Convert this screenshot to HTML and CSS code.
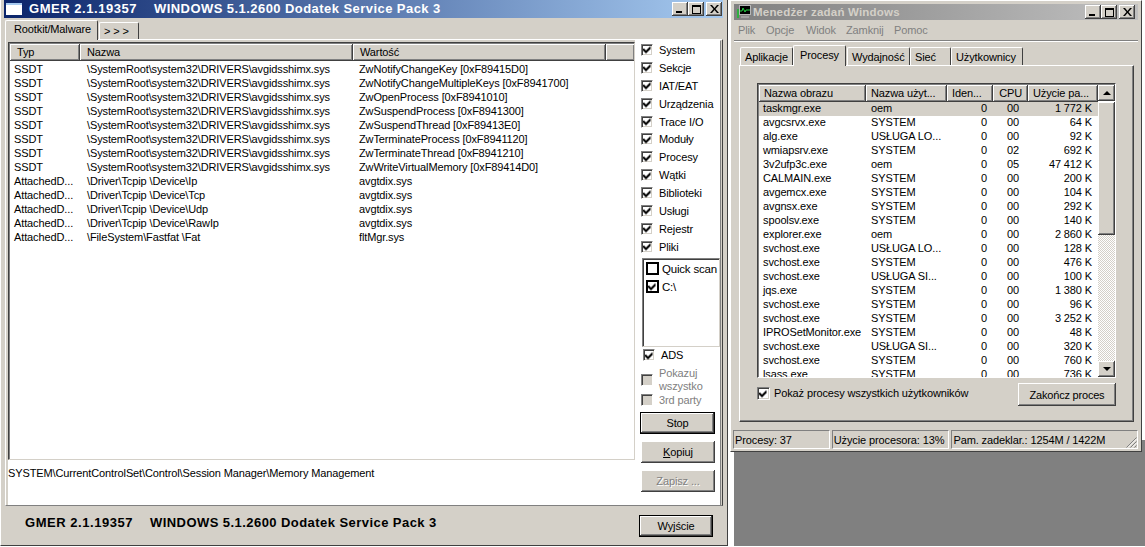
FILE: index.html
```html
<!DOCTYPE html>
<html lang="pl">
<head>
<meta charset="utf-8">
<title>GMER</title>
<link rel="stylesheet" href="styles.css">
</head>
<body>
<svg class="defs" width="0" height="0"><symbol id="chk" viewBox="0 0 9 9"><path d="M1 3.500h1v1h1v1h1v-1h1v-1h1v-1h1v-1h1v3h-1v1h-1v1h-1v1h-1v1h-1v-1h-1v-1h-1v-1h-1z" transform="translate(-0.5 0)"/></symbol></svg>
<div class="desk"></div>

<section class="win gmer">
  <header class="title active">
    <span class="appicon"></span>
    <span class="caption"><b>GMER 2.1.19357</b><b>WINDOWS 5.1.2600 Dodatek Service Pack 3</b></span>
    <span class="ctrls">
      <span class="ctl"><i class="g-min"></i></span><span class="ctl"><i class="g-max"></i></span><span class="ctl gap"><svg width="9" height="8" viewBox="0 0 9 8"><path d="M0 0h2l2.500 3 2.500-3h2l-3.500 4 3.500 4h-2l-2.500-3-2.500 3h-2l3.500-4z"/></svg></span>
    </span>
  </header>
  <nav class="gtabs">
    <span class="gtab on">Rootkit/Malware</span>
    <span class="gtab">&gt; &gt; &gt;</span>
  </nav>
  <div class="gpage">
    <div class="gmain">
      <div class="glist">
        <div class="ghead"><span>Typ</span><span>Nazwa</span><span>Wartość</span><span></span></div>
        <div class="grow"><span>SSDT</span><span>\SystemRoot\system32\DRIVERS\avgidsshimx.sys</span><span>ZwNotifyChangeKey [0xF89415D0]</span></div>
        <div class="grow"><span>SSDT</span><span>\SystemRoot\system32\DRIVERS\avgidsshimx.sys</span><span>ZwNotifyChangeMultipleKeys [0xF8941700]</span></div>
        <div class="grow"><span>SSDT</span><span>\SystemRoot\system32\DRIVERS\avgidsshimx.sys</span><span>ZwOpenProcess [0xF8941010]</span></div>
        <div class="grow"><span>SSDT</span><span>\SystemRoot\system32\DRIVERS\avgidsshimx.sys</span><span>ZwSuspendProcess [0xF8941300]</span></div>
        <div class="grow"><span>SSDT</span><span>\SystemRoot\system32\DRIVERS\avgidsshimx.sys</span><span>ZwSuspendThread [0xF89413E0]</span></div>
        <div class="grow"><span>SSDT</span><span>\SystemRoot\system32\DRIVERS\avgidsshimx.sys</span><span>ZwTerminateProcess [0xF8941120]</span></div>
        <div class="grow"><span>SSDT</span><span>\SystemRoot\system32\DRIVERS\avgidsshimx.sys</span><span>ZwTerminateThread [0xF8941210]</span></div>
        <div class="grow"><span>SSDT</span><span>\SystemRoot\system32\DRIVERS\avgidsshimx.sys</span><span>ZwWriteVirtualMemory [0xF89414D0]</span></div>
        <div class="grow"><span>AttachedD...</span><span>\Driver\Tcpip \Device\Ip</span><span>avgtdix.sys</span></div>
        <div class="grow"><span>AttachedD...</span><span>\Driver\Tcpip \Device\Tcp</span><span>avgtdix.sys</span></div>
        <div class="grow"><span>AttachedD...</span><span>\Driver\Tcpip \Device\Udp</span><span>avgtdix.sys</span></div>
        <div class="grow"><span>AttachedD...</span><span>\Driver\Tcpip \Device\RawIp</span><span>avgtdix.sys</span></div>
        <div class="grow"><span>AttachedD...</span><span>\FileSystem\Fastfat \Fat</span><span>fltMgr.sys</span></div>
      </div>
      <div class="memo">SYSTEM\CurrentControlSet\Control\Session Manager\Memory Management</div>
    </div>
    <aside class="gside">
      <div class="checks">
        <label class="ck"><span class="box"><svg><use href="#chk"/></svg></span>System</label>
        <label class="ck"><span class="box"><svg><use href="#chk"/></svg></span>Sekcje</label>
        <label class="ck"><span class="box"><svg><use href="#chk"/></svg></span>IAT/EAT</label>
        <label class="ck"><span class="box"><svg><use href="#chk"/></svg></span>Urządzenia</label>
        <label class="ck"><span class="box"><svg><use href="#chk"/></svg></span>Trace I/O</label>
        <label class="ck"><span class="box"><svg><use href="#chk"/></svg></span>Moduły</label>
        <label class="ck"><span class="box"><svg><use href="#chk"/></svg></span>Procesy</label>
        <label class="ck"><span class="box"><svg><use href="#chk"/></svg></span>Wątki</label>
        <label class="ck"><span class="box"><svg><use href="#chk"/></svg></span>Biblioteki</label>
        <label class="ck"><span class="box"><svg><use href="#chk"/></svg></span>Usługi</label>
        <label class="ck"><span class="box"><svg><use href="#chk"/></svg></span>Rejestr</label>
        <label class="ck"><span class="box"><svg><use href="#chk"/></svg></span>Pliki</label>
      </div>
      <div class="tree">
        <label class="tk"><span class="tbox"></span>Quick scan</label>
        <label class="tk"><span class="tbox"><svg><use href="#chk"/></svg></span>C:\</label>
      </div>
      <label class="ck ads"><span class="box"><svg><use href="#chk"/></svg></span>ADS</label>
      <label class="ck dis two"><span class="box"></span><span>Pokazuj<br>wszystko</span></label>
      <label class="ck dis third"><span class="box"></span>3rd party</label>
      <button class="btn def stop">Stop</button>
      <button class="btn kop"><u>K</u>opiuj</button>
      <button class="btn zap dimtext">Zapisz ...</button>
    </aside>
  </div>
  <footer class="gfoot">
    <span class="caption"><b>GMER 2.1.19357</b><b>WINDOWS 5.1.2600 Dodatek Service Pack 3</b></span>
    <button class="btn def wyj">Wyjście</button>
  </footer>
</section>

<section class="win tm">
  <header class="title inactive">
    <svg class="tmicon" width="16" height="16" viewBox="0 0 16 16"><rect x="3.500" y="1.500" width="11" height="9" fill="#000" stroke="#b8b8b8"/><path d="M4 7h2l1-3 2 4 1-2h4" fill="none" stroke="#20d040"/><rect x="1" y="5" width="2" height="9" fill="#30b040"/><rect x="5" y="12" width="8" height="2" fill="#a0a0a0"/></svg>
    <b class="tmcap">Menedżer zadań Windows</b>
    <span class="ctrls">
      <span class="ctl"><i class="g-min"></i></span><span class="ctl"><i class="g-max"></i></span><span class="ctl gap"><svg width="9" height="8" viewBox="0 0 9 8"><path d="M0 0h2l2.500 3 2.500-3h2l-3.500 4 3.500 4h-2l-2.500-3-2.500 3h-2l3.500-4z"/></svg></span>
    </span>
  </header>
  <nav class="menu"><span>Plik</span><span>Opcje</span><span>Widok</span><span>Zamknij</span><span>Pomoc</span></nav>
  <nav class="ttabs">
    <span class="ttab t1">Aplikacje</span><span class="ttab t2 on">Procesy</span><span class="ttab t3">Wydajność</span><span class="ttab t4">Sieć</span><span class="ttab t5">Użytkownicy</span>
  </nav>
  <div class="tpage">
    <div class="plist">
      <div class="ptable">
        <div class="phead"><span>Nazwa obrazu</span><span>Nazwa użyt...</span><span>Iden...</span><span class="r">CPU</span><span>Użycie pa...</span></div>
        <div class="prow sel"><span>taskmgr.exe</span><span>oem</span><span class="r">0</span><span class="r">00</span><span class="r">1 772 K</span></div>
        <div class="prow"><span>avgcsrvx.exe</span><span>SYSTEM</span><span class="r">0</span><span class="r">00</span><span class="r">64 K</span></div>
        <div class="prow"><span>alg.exe</span><span>USŁUGA LO...</span><span class="r">0</span><span class="r">00</span><span class="r">92 K</span></div>
        <div class="prow"><span>wmiapsrv.exe</span><span>SYSTEM</span><span class="r">0</span><span class="r">02</span><span class="r">692 K</span></div>
        <div class="prow"><span>3v2ufp3c.exe</span><span>oem</span><span class="r">0</span><span class="r">05</span><span class="r">47 412 K</span></div>
        <div class="prow"><span>CALMAIN.exe</span><span>SYSTEM</span><span class="r">0</span><span class="r">00</span><span class="r">200 K</span></div>
        <div class="prow"><span>avgemcx.exe</span><span>SYSTEM</span><span class="r">0</span><span class="r">00</span><span class="r">104 K</span></div>
        <div class="prow"><span>avgnsx.exe</span><span>SYSTEM</span><span class="r">0</span><span class="r">00</span><span class="r">292 K</span></div>
        <div class="prow"><span>spoolsv.exe</span><span>SYSTEM</span><span class="r">0</span><span class="r">00</span><span class="r">140 K</span></div>
        <div class="prow"><span>explorer.exe</span><span>oem</span><span class="r">0</span><span class="r">00</span><span class="r">2 860 K</span></div>
        <div class="prow"><span>svchost.exe</span><span>USŁUGA LO...</span><span class="r">0</span><span class="r">00</span><span class="r">128 K</span></div>
        <div class="prow"><span>svchost.exe</span><span>SYSTEM</span><span class="r">0</span><span class="r">00</span><span class="r">476 K</span></div>
        <div class="prow"><span>svchost.exe</span><span>USŁUGA SI...</span><span class="r">0</span><span class="r">00</span><span class="r">100 K</span></div>
        <div class="prow"><span>jqs.exe</span><span>SYSTEM</span><span class="r">0</span><span class="r">00</span><span class="r">1 380 K</span></div>
        <div class="prow"><span>svchost.exe</span><span>SYSTEM</span><span class="r">0</span><span class="r">00</span><span class="r">96 K</span></div>
        <div class="prow"><span>svchost.exe</span><span>SYSTEM</span><span class="r">0</span><span class="r">00</span><span class="r">3 252 K</span></div>
        <div class="prow"><span>IPROSetMonitor.exe</span><span>SYSTEM</span><span class="r">0</span><span class="r">00</span><span class="r">48 K</span></div>
        <div class="prow"><span>svchost.exe</span><span>USŁUGA SI...</span><span class="r">0</span><span class="r">00</span><span class="r">320 K</span></div>
        <div class="prow"><span>svchost.exe</span><span>SYSTEM</span><span class="r">0</span><span class="r">00</span><span class="r">760 K</span></div>
        <div class="prow"><span>lsass.exe</span><span>SYSTEM</span><span class="r">0</span><span class="r">00</span><span class="r">736 K</span></div>
      </div>
      <div class="sbar">
        <span class="sbtn"><i class="up"></i></span>
        <span class="thumb"></span>
        <span class="track"></span>
        <span class="sbtn"><i class="down"></i></span>
      </div>
    </div>
    <div class="pfoot">
      <label class="ck pk"><span class="box"><svg><use href="#chk"/></svg></span>Pokaż procesy wszystkich użytkowników</label>
      <button class="btn end">Zakończ proces</button>
    </div>
  </div>
  <footer class="status">
    <span class="c1">Procesy: 37</span><span class="c2">Użycie procesora: 13%</span><span class="c3">Pam. zadeklar.: 1254M / 1422M<svg class="grip" width="12" height="12" viewBox="0 0 12 12"><path d="M11.500 1.500l-10 10M11.500 5.500l-6 6M11.500 9.500l-2 2" stroke="#808080" fill="none"/><path d="M11.500 3l-8.500 8.500M11.500 7l-4.500 4.500" stroke="#fff" fill="none"/></svg></span>
  </footer>
</section>
</body>
</html>
```
FILE: styles.css
```css
* { box-sizing: border-box; }
html, body { margin: 0; padding: 0; }
body {
  position: relative; width: 1145px; height: 547px; overflow: hidden; background: #fff;
  font: 11px/14px "Liberation Sans", Arial, sans-serif; color: #000; letter-spacing: -.12px;
}
.defs { position: absolute; }
.desk { position: absolute; left: 734px; top: 440px; right: 0; height: 106px; background: #808080; }
.win { position: absolute; background: #d4d0c8; display: flex; flex-direction: column; }
button { font: inherit; color: inherit; padding: 0; letter-spacing: inherit; }

/* title bars */
.title { display: flex; align-items: center; height: 16px; flex: none; }
.active { background: linear-gradient(90deg, #0a246a, #a6caf0); color: #fff; }
.inactive { background: linear-gradient(90deg, #808080, #c0c0c0); color: #d4d0c8; }
.caption { display: flex; gap: 17px; font-size: 13px; letter-spacing: .44px; white-space: nowrap; }
.caption b:first-child { letter-spacing: .54px; }
.ctrls { margin-left: auto; display: flex; padding-right: 1px; }
.ctl {
  width: 16px; height: 14px; background: #d4d0c8; display: flex; align-items: center; justify-content: center;
  box-shadow: inset -1px -1px #404040, inset 1px 1px #fff, inset -2px -2px #808080; position: relative;
}
.gap { margin-left: 2px; }
.g-min { width: 6px; height: 2px; background: #000; margin: 6px 3px 0 0; }
.g-max { width: 9px; height: 9px; border: 1px solid #000; border-top-width: 2px; }

/* GMER */
.gmer {
  left: 0; top: 0; width: 728px; height: 546px; padding: 0 4px 0 4px;
  border-right: 1px solid #404040; border-bottom: 1px solid #404040; border-left: 1px solid #fff;
}
.gmer .title { height: 18px; margin-left: -1px; }
.appicon { width: 16px; height: 12px; margin: 0 7px 0 2px; background: #fff; border-top: 2px solid #a6caf0; flex: none; }
.gtabs { display: flex; align-items: flex-end; height: 21px; flex: none; }
.gtab {
  background: #d4d0c8; border: 1px solid; border-color: #fff #404040 transparent #fff; border-bottom: 0;
  border-radius: 2px 2px 0 0; height: 17px; padding: 1px 0 0 4px; width: 40px; white-space: nowrap; margin-left: 1px;
}
.gtab.on { width: 93px; height: 20px; margin-left: 0; padding: 1px 0 0 8px; position: relative; top: 1px; z-index: 1; }
.gpage {
  height: 467px; flex: none; display: flex; background: #d4d0c8;
  border: 1px solid; border-color: #fff #404040 #808080 #fff;
  padding: 2px 1px 0 2px;
}
.gmain { width: 627px; flex: none; display: flex; flex-direction: column; }
.glist {
  height: 418px; flex: none; overflow: hidden; background: #fff; border: 1px solid; border-color: #404040 #d4d0c8 #d4d0c8 #404040;
  box-shadow: inset 1px 1px #808080; padding: 1px 0 0 1px;
}
.ghead { display: grid; grid-template-columns: 70px 273px 253px 29px; height: 17px; margin-bottom: 1px; }
.ghead span {
  background: #d4d0c8; padding: 1px 0 0 7px; height: 17px;
  box-shadow: inset -1px -1px #404040, inset 1px 1px #fff, inset -2px -2px #808080;
}
.grow { display: grid; grid-template-columns: 73px 272px 253px; height: 14px; margin-left: 4px; white-space: nowrap; letter-spacing: -.12px; }
.memo { height: 45px; flex: none; padding: 6px 0 0 0; white-space: nowrap; background: #fff; }
.gside { flex: 1; min-width: 0; padding: 0 0 0 6px; margin-top: -2px; background: #fff; border-right: 1px solid #808080; border-top: 1px solid #fff; }
.checks { display: grid; grid-auto-rows: 17.9px; }
.ck { display: flex; align-items: center; gap: 6px; white-space: nowrap; }
.box {
  width: 12px; height: 12px; flex: none; background: #fff; display: flex; align-items: center; justify-content: center;
  border: 1px solid; border-color: #808080 #fff #fff #808080; box-shadow: inset 1px 1px #404040, inset -1px -1px #d4d0c8;
}
.box svg { width: 9px; height: 9px; }
.tree {
  width: 78px; height: 89px; margin: 2px 0 0 1px; padding: 1px 0 0 3px; border: 1px solid; border-color: #808080 #d4d0c8 #d4d0c8 #808080;
  box-shadow: inset 1px 1px #404040; display: flex; flex-direction: column; overflow: hidden;
}
.tk { display: flex; align-items: center; gap: 3px; height: 18px; white-space: nowrap; font-size: 11.500px; letter-spacing: -.2px; }
.tbox { width: 13px; height: 13px; border: 2px solid #000; flex: none; display: flex; align-items: center; justify-content: center; }
.tbox svg { width: 9px; height: 9px; }
.ads { margin: 0 0 0 2px; height: 17px; }
.dis { color: #808080; }
.dis .box { background: #d4d0c8; }
.two { height: 26px; margin-top: 3px; line-height: 13px; }
.third { height: 15px; }
.btn {
  display: block; background: #d4d0c8; border: 0; text-align: center; height: 22px; width: 74px;
  box-shadow: inset -1px -1px #404040, inset 1px 1px #fff, inset -2px -2px #808080;
}
.def { box-shadow: 0 0 0 1px #000, inset -1px -1px #404040, inset 1px 1px #fff, inset -2px -2px #808080; }
.stop { margin: 5px 0 0 0; width: 73px; height: 20px; }
.kop { margin: 8px 0 0 0; }
.zap { margin: 7px 0 0 0; }
.dimtext { color: #808080; text-shadow: 1px 1px #fff; }
.gfoot { flex: 1; display: flex; align-items: center; padding: 0 11px 0 20px; justify-content: space-between; }
.wyj { width: 72px; height: 20px; }
.gfoot .caption { margin-top: -6px; }

/* Task manager */
.tm {
  left: 730px; top: 0; width: 412px; height: 452px; padding: 3px;
  border-right: 1px solid #404040; border-bottom: 1px solid #404040; border-left: 1px solid #fff; border-top: 1px solid #fff;
}
.tmicon { margin: 0 1px 0 2px; flex: none; }
.tmcap { font-size: 11.500px; letter-spacing: .2px; }
.inactive .ctrls { padding-right: 3px; }
.menu { height: 21px; flex: none; display: flex; align-items: center; color: #808080; border-bottom: 1px solid #808080; box-shadow: 0 1px #fff; padding: 0 0 0 4px; }
.menu span:nth-child(1) { width: 28px; }
.menu span:nth-child(2) { width: 40px; }
.menu span:nth-child(3) { width: 40px; }
.menu span:nth-child(4) { width: 48px; }
.ttabs { display: flex; height: 24px; align-items: flex-end; flex: none; padding: 0 0 0 6px; }
.ttab {
  display: block; height: 18px; background: #d4d0c8; border: 1px solid; border-color: #fff #404040 transparent #fff; border-bottom: 0;
  border-radius: 2px 2px 0 0; padding: 2px 0 0 4px; white-space: nowrap;
}
.t1 { width: 53px; }
.t2 { width: 53px; height: 21px; position: relative; top: 1px; z-index: 1; padding: 2px 0 0 6px; }
.t3 { width: 63px; margin-left: 1px; }
.t4 { width: 41px; }
.t5 { width: 72px; }
.tpage {
  width: 395px; height: 357px; margin-left: 5px; flex: none; padding: 17px 15px 0 17px;
  border: 1px solid; border-color: #fff #404040 #404040 #fff; box-shadow: inset -1px -1px #808080;
}
.plist { width: 359px; height: 295px; display: flex; border: 1px solid; border-color: #404040 #fff #fff #404040; background: #fff; box-shadow: inset 1px 1px #808080; padding: 1px 0 0 1px; overflow: hidden; }
.ptable { width: 339px; flex: none; overflow: hidden; }
.phead, .prow { display: grid; grid-template-columns: 107px 81px 46px 35px 70px; white-space: nowrap; }
.phead { height: 17px; }
.phead span {
  background: #d4d0c8; padding: 1px 0 0 5px; height: 17px;
  box-shadow: inset -1px -1px #404040, inset 1px 1px #fff, inset -2px -2px #808080;
}
.phead .r { text-align: right; padding: 1px 6px 0 0; }
.prow { height: 14px; line-height: 13px; }
.prow span:first-child { padding-left: 4px; }
.prow span:nth-child(2) { padding-left: 5px; }
.prow .r { text-align: right; }
.prow .r:nth-child(3) { padding-right: 6px; }
.prow .r:nth-child(4) { padding-right: 9px; }
.prow .r:nth-child(5) { padding-right: 6px; }
.sel { background: #d4d0c8; }
.sbar { width: 17px; flex: none; display: flex; flex-direction: column; }
.sbtn {
  height: 16px; flex: none; background: #d4d0c8; display: flex; align-items: center; justify-content: center;
  box-shadow: inset -1px -1px #404040, inset 1px 1px #fff, inset -2px -2px #808080;
}
.sbtn .up { border: 4px solid transparent; border-top: 0; border-bottom-color: #000; }
.sbtn .down { border: 4px solid transparent; border-bottom: 0; border-top-color: #000; }
.thumb { height: 133px; flex: none; background: #d4d0c8; box-shadow: inset -1px -1px #404040, inset 1px 1px #fff, inset -2px -2px #808080; margin-top: 1px; }
.track { flex: 1; background: repeating-conic-gradient(#d4d0c8 0 25%, #fff 0 50%) 0 0 / 2px 2px; }
.pfoot { display: flex; justify-content: space-between; padding: 5px 0 0 0; align-items: flex-start; width: 359px; }
.pk { margin-top: 3px; gap: 4px; }
.pk .box { width: 13px; height: 13px; }
.end { width: 98px; height: 23px; letter-spacing: -.2px; }
.status { display: flex; gap: 2px; margin: 8px 0 0 -1px; height: 19px; flex: none; }
.status span { display: block; border: 1px solid; border-color: #808080 #fff #fff #808080; padding: 2px 0 0 1px; white-space: nowrap; height: 19px; position: relative; }
.c1 { width: 97px; }
.c2 { width: 118px; }
.c3 { width: 187px; }
.grip { position: absolute; right: 0; bottom: 0; }
```
